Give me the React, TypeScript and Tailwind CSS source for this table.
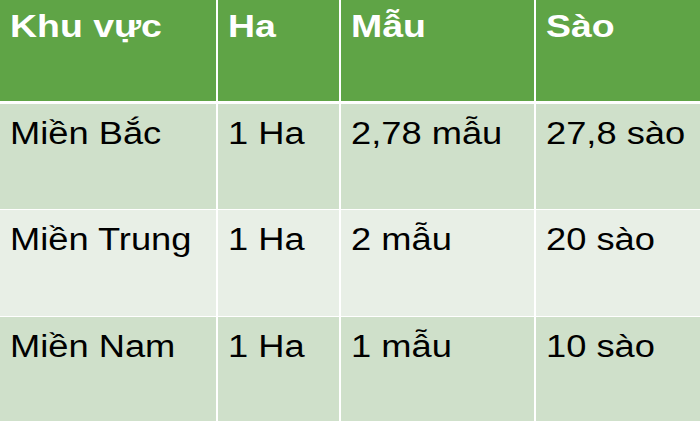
import React from 'react';

const header = ['Khu vực', 'Ha', 'Mẫu', 'Sào'];

const rows = [
  { cells: ['Miền Bắc', '1 Ha', '2,78 mẫu', '27,8 sào'], bg: 'bg-[#cfe0ca]', h: 'h-[105px]' },
  { cells: ['Miền Trung', '1 Ha', '2 mẫu', '20 sào'], bg: 'bg-[#e8efe6]', h: 'h-[106px]' },
  { cells: ['Miền Nam', '1 Ha', '1 mẫu', '10 sào'], bg: 'bg-[#cfe0ca]', h: 'h-[104px]' },
];

const cols = 'grid grid-cols-[216px_121px_193px_1fr] gap-x-[2px]';

// the source slide is stretched sideways, so the text is widened to match
const Txt = ({ children }: { children: React.ReactNode }) => (
  <span className="inline-block origin-left scale-x-[1.17] whitespace-nowrap">{children}</span>
);

const App: React.FC = () => {
  return (
    <div
      className="w-[700px] h-[421px] bg-white overflow-hidden flex flex-col"
      style={{ fontFamily: '"Liberation Sans", Arial, sans-serif' }}
    >
      <div className={`${cols} h-[101px] mb-[3px]`}>
        {header.map((h) => (
          <div key={h} className="bg-[#5fa446] text-white font-bold text-[32px] leading-8 pl-[10px] pt-[10px]">
            <Txt>{h}</Txt>
          </div>
        ))}
      </div>
      {rows.map((r, i) => (
        <div key={i} className={`${cols} ${r.h} ${i < rows.length - 1 ? 'mb-[1px]' : ''}`}>
          {r.cells.map((c, j) => (
            <div key={j} className={`${r.bg} text-black text-[31px] leading-8 pl-[10px] pt-[14px]`}>
              <Txt>{c}</Txt>
            </div>
          ))}
        </div>
      ))}
    </div>
  );
};

export default App;
